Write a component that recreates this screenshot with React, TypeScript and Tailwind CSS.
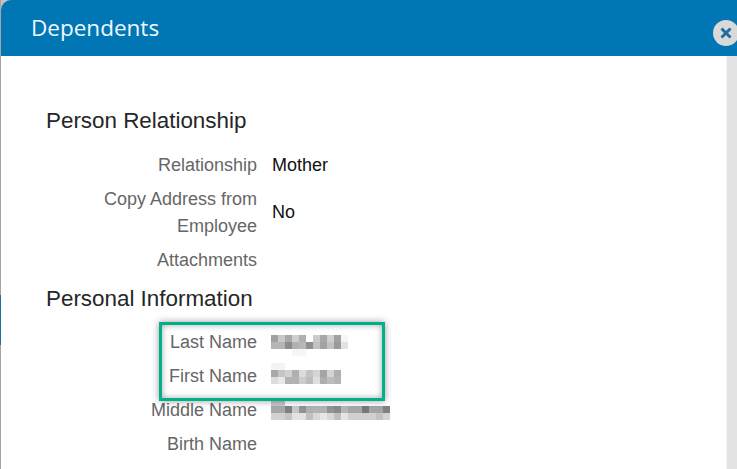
import React from "react";

const BLOCK = 7;

// pixelated patches covering the redacted names
const lastName = [
  "#a0a0a0 #c8c8c8 #a8a8a8 #cfcfcf #b0b0b0 #ffffff #cbcbcb #a8a8a8 #cfcfcf #a0a0a0 #f6f6f6",
  "#b5b5b5 #b5b5b5 #8c8c8c #b0b0b0 #b8b8b8 #909090 #c2c2c2 #a2a2a2 #c2c2c2 #9a9a9a #e2e2e2",
  "#ffffff #ffffff #ffffff #f6f6f6 #f6f6f6 #ffffff #ffffff #ffffff #ffffff #ffffff #ffffff",
];
const firstName = [
  "#f4f4f4 #f4f4f4 #ffffff #ffffff #ffffff #ffffff #ffffff #ffffff #ffffff #ffffff",
  "#a8a8a8 #c4c4c4 #d2d2d2 #b0b0b0 #dcdcdc #c4c4c4 #d4d4d4 #a4a4a4 #d4d4d4 #b0b0b0",
  "#dcdcdc #e8e8e8 #b2b2b2 #b2b2b2 #cccccc #bcbcbc #dedede #adadad #bcbcbc #b4b4b4",
];
const middleName = [
  "#c8c8c8 #c8c8c8 #ffffff #ffffff #ffffff #ffffff #ffffff #ffffff #ffffff #ffffff #ffffff #ffffff #ffffff #ffffff #ffffff #ffffff #ffffff",
  "#a8a8a8 #a8a8a8 #808080 #c8c8c8 #929292 #b0b0b0 #b2b2b2 #b2b2b2 #929292 #8a8a8a #b6b6b6 #a6a6a6 #a6a6a6 #787878 #a4a4a4 #a4a4a4 #808080",
  "#d2d2d2 #d2d2d2 #c4c4c4 #e2e2e2 #e2e2e2 #c0c0c0 #d8d8d8 #e6e6e6 #d8d8d8 #c0c0c0 #e4e4e4 #d0d0d0 #d0d0d0 #d0d0d0 #d0d0d0 #c2c2c2 #d4d4d4",
];

function Mosaic({ rows }: { rows: string[] }) {
  const grid = rows.map((r) => r.split(" "));
  const cols = grid[0].length;
  return (
    <svg width={cols * BLOCK} height={rows.length * BLOCK} shapeRendering="crispEdges" className="block">
      {grid.map((row, y) =>
        row.map((fill, x) => (
          <rect key={`${x}-${y}`} x={x * BLOCK} y={y * BLOCK} width={BLOCK} height={BLOCK} fill={fill} />
        ))
      )}
    </svg>
  );
}

function FieldRow({ label, value, children }: { label: string; value?: string; children?: React.ReactNode }) {
  return (
    <div className="flex items-center gap-[15px] py-[3.5px]">
      <div className="w-[256px] pl-[84px] text-right text-[#666666] leading-[27px]">{label}</div>
      <div className="text-[#111111] leading-[27px]">{value}{children}</div>
    </div>
  );
}

export default function App() {
  return (
    <div className="w-[737px] h-[469px] overflow-hidden flex bg-white font-['Liberation_Sans',Arial,sans-serif] text-[18px] relative">
      {/* page behind the dialog */}
      <div className="w-px shrink-0 flex flex-col bg-[#a6a6a6]">
        <div className="h-[295px]" />
        <div className="h-[50px] bg-[#1f6f99]" />
      </div>

      <div className="flex-1 flex flex-col min-w-0 bg-[#c4c4c4]">
        <header className="h-[56px] shrink-0 bg-[#0076b5] rounded-tl-[10px] flex items-center pl-[30px]">
          <h1 className="font-['Open_Sans',sans-serif] text-[22.5px] text-[#f2f8fb] leading-none">Dependents</h1>
        </header>

        <div className="flex-1 flex min-h-0 bg-white">
          <main className="flex-1 overflow-hidden border-r border-[#f6f6f6]">
            <section className="pt-[48px]">
              <h2 className="pl-[45px] text-[22.4px] text-[#262626] leading-[34px]">Person Relationship</h2>
              <div className="mt-[10px]">
                <FieldRow label="Relationship" value="Mother" />
                <FieldRow label="Copy Address from Employee" value="No" />
                <FieldRow label="Attachments" />
              </div>
            </section>
            <section className="mt-[5px]">
              <h2 className="pl-[45px] text-[22.4px] text-[#262626] leading-[34px]">Personal Information</h2>
              <div className="mt-[9px]">
                <FieldRow label="Last Name"><div className="pt-[6.5px] h-[27px] -ml-[1px]"><Mosaic rows={lastName} /></div></FieldRow>
                <FieldRow label="First Name"><div className="h-[27px] pt-[0.5px] -ml-[1px]"><Mosaic rows={firstName} /></div></FieldRow>
                <FieldRow label="Middle Name"><div className="pt-[2.5px] h-[27px] -ml-[1px]"><Mosaic rows={middleName} /></div></FieldRow>
                <FieldRow label="Birth Name" />
              </div>
            </section>
          </main>
          <div className="w-[10px] shrink-0 bg-[#e3e3e3]" />
        </div>
      </div>

      {/* close button hangs over the header corner */}
      <button className="absolute left-[713px] top-[20px] w-[26px] h-[26px] rounded-full bg-[#d9d9d9] flex items-center justify-center">
        <svg width="14" height="14" viewBox="0 0 14 14" className="-ml-[1px]">
          <path d="M2.5 2.5L11.5 11.5M11.5 2.5L2.5 11.5" stroke="#1c6f9e" strokeWidth="3" />
        </svg>
      </button>

      {/* annotation box drawn on the screenshot */}
      <div className="absolute left-[159px] top-[322px] w-[226px] h-[79px] border-[3px] border-[#00b08c] shadow-[0_0_7px_rgba(0,0,0,0.4),inset_0_0_6px_rgba(0,0,0,0.35)]" />
    </div>
  );
}
